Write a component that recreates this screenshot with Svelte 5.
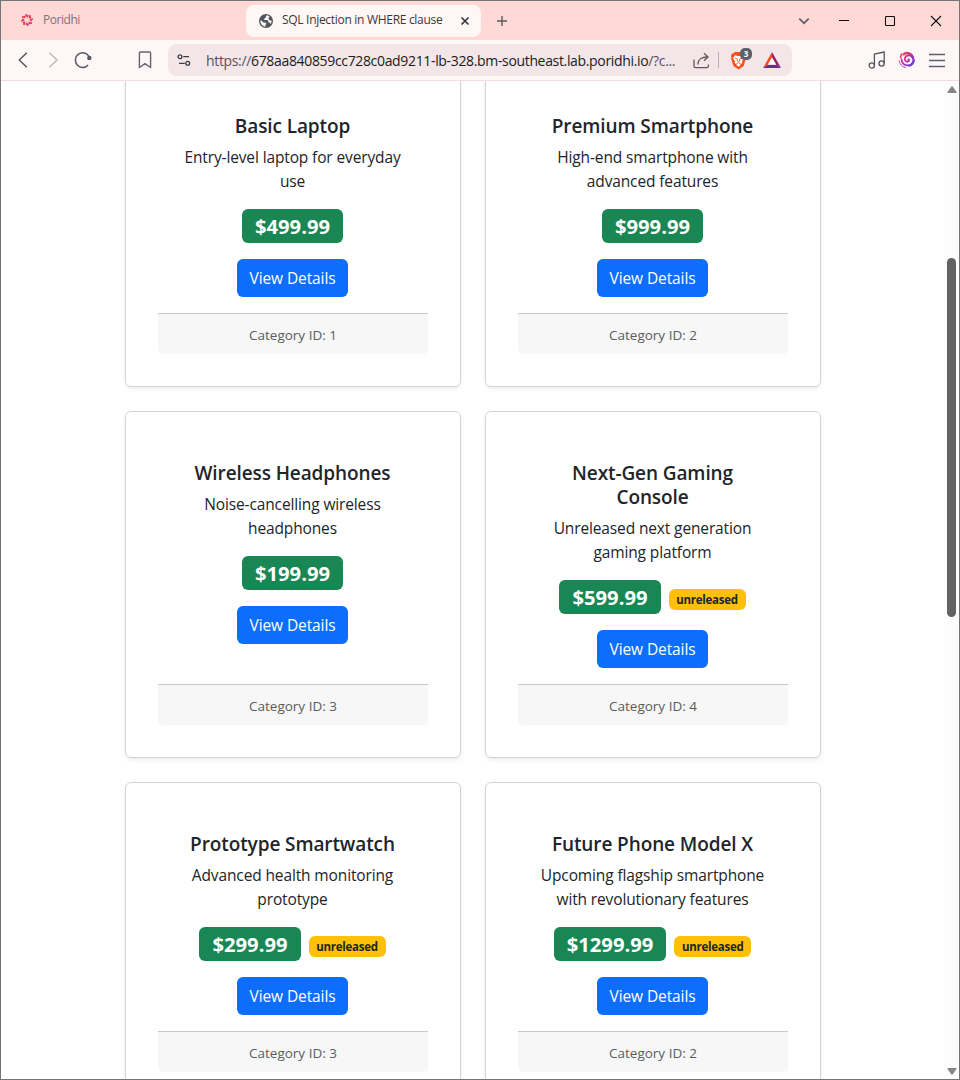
<script>
  const products = [
    { name: 'Basic Laptop', text: 'Entry-level laptop for everyday\nuse', price: '499.99', category: 1 },
    { name: 'Premium Smartphone', text: 'High-end smartphone with\nadvanced features', price: '999.99', category: 2 },
    { name: 'Wireless Headphones', text: 'Noise-cancelling wireless\nheadphones', price: '199.99', category: 3 },
    { name: 'Next-Gen Gaming\nConsole', text: 'Unreleased next generation\ngaming platform', price: '599.99', category: 4, unreleased: true },
    { name: 'Prototype Smartwatch', text: 'Advanced health monitoring\nprototype', price: '299.99', category: 3, unreleased: true },
    { name: 'Future Phone Model X', text: 'Upcoming flagship smartphone\nwith revolutionary features', price: '1299.99', category: 2, unreleased: true }
  ];
  const petals = [0, 45, 90, 135, 180, 225, 270, 315];
</script>

<div class="window">
  <header class="tabs">
    <div class="tab">
      <svg width="14" height="14" viewBox="-7 -7 14 14" fill="none" stroke-width="1.6">
        {#each petals as a, i}
          <path d="M-1.300-5.800L.2-3.500L1.300-4.600" transform="rotate({a})" stroke={i % 2 ? '#e83a3a' : '#c73a8c'} />
        {/each}
      </svg>
      <span>Poridhi</span>
    </div>
    <div class="tab active">
      <svg width="14" height="14" viewBox="0 0 14 14">
        <circle cx="7" cy="7" r="7" fill="#50565f" />
        <path d="M8 1.300L6.800 2.500v1.300L5.300 4.500v1.400h3l1 1.200v1.300h1.400l.7 1.500c1-1 1.300-2.200 1.200-3.500H11L9.600 5.200V3.600L10.800 3C10 2.100 9 1.500 8 1.300zM1.300 6.800c0 3 2.300 5.600 5.200 5.900v-1.800l1-1.200-1.300-1.300H4.400L2.800 6.800z" fill="#fff7f6" />
      </svg>
      <span>SQL Injection in WHERE clause</span>
      <svg class="close" width="10" height="10" viewBox="0 0 10 10" fill="none" stroke="#33373d" stroke-width="1.700"><path d="M1.500 1.500l7 7M8.500 1.500l-7 7" /></svg>
    </div>
    <svg class="plus" width="12" height="12" viewBox="0 0 12 12" stroke="#5a5a60" stroke-width="1.400"><path d="M6 1v10M1 6h10" /></svg>
    <div class="controls">
      <svg width="12" height="12" viewBox="0 0 12 12" fill="none" stroke="#5b6069" stroke-width="1.700"><path d="M1.300 3.700L6 8.200l4.700-4.500" /></svg>
      <svg width="12" height="12" viewBox="0 0 12 12" stroke="#111"><path d="M1 5.500h10" /></svg>
      <svg width="12" height="12" viewBox="0 0 12 12" fill="none" stroke="#111" stroke-width="1.100"><rect x="1.500" y="1.500" width="9" height="9" rx=".7" /></svg>
      <svg width="12" height="12" viewBox="0 0 12 12" stroke="#111" stroke-width="1.100"><path d="M1 1l10 10M11 1L1 11" /></svg>
    </div>
  </header>

  <nav class="toolbar">
    <div class="history">
      <svg width="18" height="18" viewBox="0 0 18 18" fill="none" stroke="#555a63" stroke-width="1.500"><path d="M12.800 1.800L5.300 9l7.500 7.200" /></svg>
      <svg width="18" height="18" viewBox="0 0 18 18" fill="none" stroke="#bfbabd" stroke-width="1.500"><path d="M5.500 1.800L13 9l-7.500 7.200" /></svg>
      <svg width="18" height="18" viewBox="0 0 18 18" fill="none" stroke="#555a63" stroke-width="1.500"><path d="M15 5.500A7.300 7.300 0 1 0 14.100 14" /><circle cx="15.300" cy="7" r="2.200" fill="#555a63" stroke="none" /></svg>
    </div>
    <svg class="bookmark" width="14" height="18" viewBox="0 0 14 18" fill="none" stroke="#62666e" stroke-width="1.400" stroke-linejoin="round"><path d="M1.400 2.200q0-1.200 1.200-1.200h8.800q1.200 0 1.200 1.200V16.500L7 12.700 1.400 16.500z" /></svg>
    <div class="address">
      <svg width="14" height="14" viewBox="0 0 14 14" fill="none" stroke="#403b40" stroke-width="1.300"><circle cx="3" cy="3.700" r="1.900" /><path d="M6.200 3.700H12M2 10.300h5.800" /><circle cx="10.700" cy="10.300" r="1.900" /></svg>
      <span class="url"><i>https://</i>678aa840859cc728c0ad9211-lb-328.bm-southeast.lab.poridhi.io<i>/?c...</i></span>
      <svg class="share" width="17" height="17" viewBox="0 0 17 17" fill="none" stroke="#62575b" stroke-width="1.300" stroke-linejoin="round"><path d="M1 7.500V14q0 1.600 1.600 1.600h11.200q1.600 0 1.600-1.600v-1.500M4.800 12.500C5.200 7.500 7.500 5 14.500 5M11 1.300L15 5l-4 3.700" /></svg>
      <span class="rule"></span>
      <div class="shield">
        <svg width="17" height="19" viewBox="0 0 17 19"><path d="M4.800 1h7.400l1.500 1.500h1.500l.8 2.500-.5 1.500.3 1.300-2.200 7.200-5.100 3.500-5.100-3.500L1.200 7.800l.3-1.300L1 5l.8-2.500h1.500z" fill="#fb4f1a" /><path d="M5 4.300l2.500.6h2l2.500-.6 2 2.900-2.100 3.300.5 1.500-2.400 1.400.7.700-2.200 1.700-2.200-1.700.7-.7L4.600 12l.5-1.500L3 7.200z" fill="#fff" /><path d="M4.800 7.200l2.200.5M12.200 7.200l-2.200.5M7.500 7.800l-.3 2.200 1.300.8 1.300-.8-.3-2.200M6.300 12.600l2.200-.9 2.200.9" fill="none" stroke="#fb4f1a" stroke-width=".8" /></svg>
        <span class="count">3</span>
      </div>
      <svg class="bat" width="18" height="16" viewBox="0 0 18 16"><path d="M9 0L0 16l5.200-3.500L9 6z" fill="#ff4724" /><path d="M9 0l9 16-5.200-3.500L9 6z" fill="#9e1f63" /><path d="M0 16h18l-5.200-3.500H5.200z" fill="#662d91" /><path d="M9 5.300l4.300 7.500H4.700z" fill="#fff" /></svg>
    </div>
    <div class="extras">
      <svg width="18" height="18" viewBox="0 0 18 18" fill="none" stroke="#50555e" stroke-width="1.300" stroke-linejoin="round"><circle cx="3.800" cy="14.500" r="2.600" /><circle cx="13.600" cy="12.500" r="2.600" /><path d="M6.400 14.500V3.200l9.800-2.200v11.500" /></svg>
      <svg width="18" height="18" viewBox="0 0 18 18" fill="none" stroke="url(#swirl)" stroke-linecap="round">
        <defs><linearGradient id="swirl" gradientUnits="userSpaceOnUse" x1="3" y1="2" x2="15" y2="16"><stop offset="0" stop-color="#fa4b50" /><stop offset=".5" stop-color="#b52aa9" /><stop offset="1" stop-color="#4a48e0" /></linearGradient></defs>
        <path d="M10.200 8.300c1.200.1 1.300 2-.3 2.300-2.200.4-3.700-1.700-2.900-3.800 1.300-3.300 6-3.300 7.700-.3 1.700 3.200-.4 7.300-4.200 7.800-4 .5-7-2.300-7-6.200" stroke-width="1.700" />
        <path d="M14.900 6.500C13.500 2.500 9 .7 5.800 3.200" stroke-width="2.600" />
        <path d="M3.600 3.200C2.900 4.100 2.600 5.200 2.600 6.400" stroke-width="1.700" />
        <path d="M1 9.700c.6 3.300 3 6 6.400 6.800" stroke-width=".9" />
        <path d="M16.300 9c-.3 2.900-2.300 5.200-5 6" stroke-width="1.500" />
      </svg>
      <svg width="18" height="18" viewBox="0 0 18 18" stroke="#5c6068" stroke-width="1.500"><path d="M1 3.500h16M1 9.500h16M1 15.500h16" /></svg>
    </div>
  </nav>

  <div class="view">
    <main>
      <div class="grid">
        {#each products as p}
          <article class="card">
            <div class="body">
              <h5>{p.name}</h5>
              <p>{p.text}</p>
              <div class="prices">
                <span class="price">${p.price}</span>
                {#if p.unreleased}<span class="flag">unreleased</span>{/if}
              </div>
              <button>View Details</button>
            </div>
            <footer>Category ID: {p.category}</footer>
          </article>
        {/each}
      </div>
    </main>
    <aside class="scrollbar">
      <svg width="10" height="8" viewBox="0 0 10 8" fill="#858585"><path d="M4.200.8q.8-.9 1.600 0L9.500 6q.3 1-.7 1H1.200Q.2 7 .5 6z" /></svg>
      <div class="thumb"></div>
      <svg class="down" width="10" height="8" viewBox="0 0 10 8" fill="#858585"><path d="M4.200 7.200q.8.900 1.600 0L9.500 2q.3-1-.7-1H1.200Q.2 1 .5 2z" /></svg>
    </aside>
  </div>
</div>

<style>
  :global(body) { margin: 0; overflow: hidden; }
  .window, .window * { box-sizing: border-box; }
  svg { display: block; flex: none; }
  .window {
    width: 960px; height: 1080px; border: 1px solid #747474; background: #fff;
    display: flex; flex-direction: column; overflow: hidden;
    font-family: "Open Sans", "Noto Sans", sans-serif; color: #212529;
  }
  .tabs { height: 39px; flex: none; background: #ffd9d6; display: flex; align-items: center; }
  .tab { display: flex; align-items: center; width: 245px; height: 32px; padding: 0 0 1px 19px; gap: 9px; font-size: 12px; letter-spacing: -0.3px; color: #857473; white-space: nowrap; }
  .tab:first-child { letter-spacing: -0.45px; }
  .tab.active { width: 235px; padding: 0 11px 0 13px; background: #fff7f6; border-radius: 8px; color: #3a3739; }
  .tab span { position: relative; top: -1px; }
  .close { margin-left: auto; }
  .plus { margin-left: 15px; }
  .controls { margin-left: auto; display: flex; gap: 34px; padding-right: 17px; }
  .controls svg:first-child { margin-right: -6px; }
  .toolbar { height: 41px; flex: none; background: #fff7f6; border-bottom: 1px solid #f3dcda; display: flex; align-items: center; }
  .history { display: flex; gap: 12px; padding-left: 13px; }
  .bookmark { margin-left: 46px; }
  .address { width: 624px; height: 32px; margin-left: 16px; padding-left: 9px; border-radius: 9px; background: #f2e6e8; display: flex; align-items: center; }
  .url { width: 472px; margin-left: 15px; font-size: 14px; letter-spacing: -0.34px; color: #211b20; white-space: nowrap; }
  .url i { font-style: normal; color: #5c5055; }
  .share { margin-left: 15px; }
  .rule { width: 1px; height: 16px; margin-left: 8px; background: #b9b0b8; }
  .shield { position: relative; margin-left: 11px; }
  .count { position: absolute; left: 10px; top: -3px; width: 12px; height: 12px; border-radius: 5px; background: #5b5f6b; color: #fff; font-size: 8px; font-weight: 700; line-height: 12px; text-align: center; }
  .bat { margin-left: 16px; }
  .extras { margin-left: auto; display: flex; gap: 12px; padding-right: 13px; }
  .view { flex: 1; min-height: 0; display: flex; }
  main { flex: 1; min-width: 0; overflow: hidden; }
  .grid { margin: -17px 0 0 124px; display: grid; grid-template-columns: 336px 336px; gap: 24px; }
  .card { display: flex; flex-direction: column; padding: 32px; border: 1px solid #d3d4d5; border-radius: 6px; box-shadow: 0 2px 4px rgba(0, 0, 0, .075); text-align: center; }
  .body { flex: 1; padding: 16px 17px 16px 16px; display: flex; flex-direction: column; align-items: center; }
  h5 { margin: 0 0 7px; padding-top: 1px; font-size: 19px; line-height: 24px; font-weight: 590; letter-spacing: -0.1px; white-space: pre; }
  p { margin: 0 0 16px; font-size: 15.5px; line-height: 24px; letter-spacing: -0.13px; white-space: pre; }
  .prices { display: flex; gap: 8px; height: 34px; margin-bottom: 16px; }
  .price { height: 34px; padding: 0 13px; border-radius: 6px; background: #198754; color: #fff; font-size: 20.2px; line-height: 34px; font-weight: 700; }
  .flag { width: 77px; height: 21px; margin-top: 9px; border-radius: 6px; background: #ffc107; font-size: 11.5px; letter-spacing: -0.25px; line-height: 22px; font-weight: 700; }
  button { width: 111px; height: 38px; padding: 0; border: 0; border-radius: 6px; background: #0d6efd; color: #fff; font: 15.5px/38px "Open Sans", "Noto Sans", sans-serif; letter-spacing: -0.1px; }
  footer { height: 41px; border-top: 1px solid #c8c8c8; border-radius: 0 0 5px 5px; background: #f7f7f7; color: #595c5f; font-size: 13.5px; line-height: 42px; }
  .scrollbar { width: 15px; flex: none; background: #fcfcfc; display: flex; flex-direction: column; align-items: center; padding: 5px 0 4px; }
  .thumb { width: 9px; height: 359px; margin-top: 164px; border-radius: 5px; background: #636363; }
  .down { margin-top: auto; }
</style>
